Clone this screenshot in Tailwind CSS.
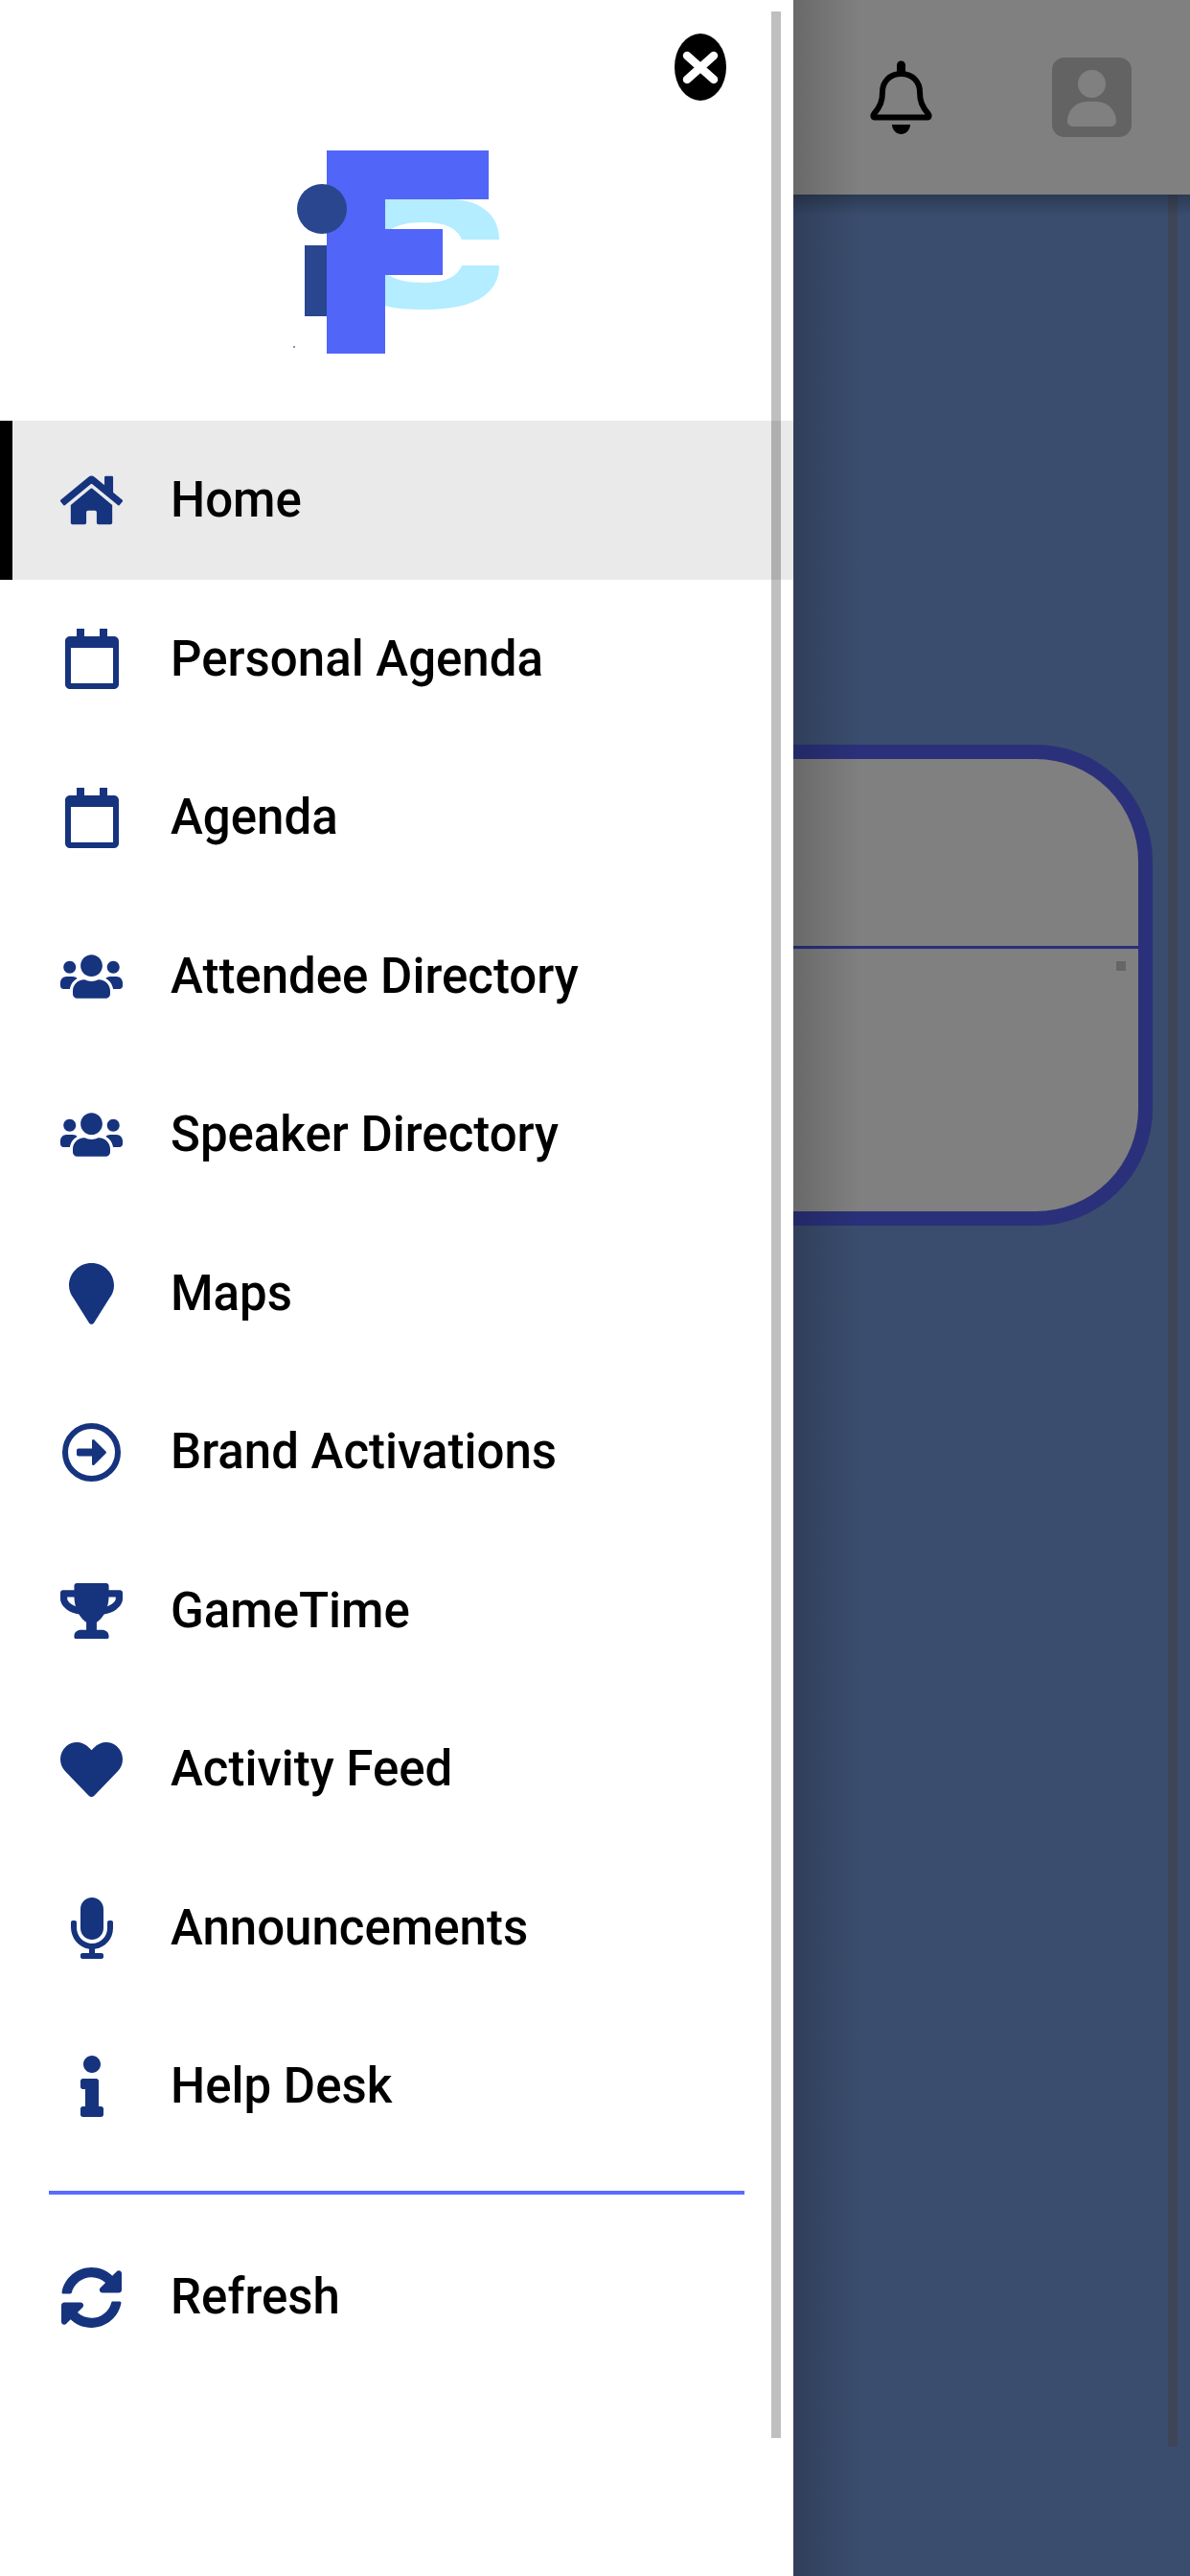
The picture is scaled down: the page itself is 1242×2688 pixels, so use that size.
<!DOCTYPE html>
<html lang="en">
  <head>
    <meta charset="UTF-8" />
    <meta name="viewport" content="width=device-width, initial-scale=1.0" />
    <title>Menu</title>
    <script src="https://cdn.jsdelivr.net/npm/@tailwindcss/browser@4"></script>
  </head>

  <body class="bg-[#3a4d6e]">
    <div class="flex w-[1242px] h-[2688px] overflow-hidden font-['Roboto',sans-serif]">
      <!-- drawer -->
      <aside class="relative w-[828px] shrink-0 bg-white text-black font-medium text-[51px]">
        <button class="absolute left-[704px] top-[35px] w-[54px] h-[70px]">
          <svg viewBox="0 0 54 70" class="block w-full h-full">
            <ellipse cx="27" cy="35" rx="27" ry="35" fill="#000" />
            <path d="M13 23L41 48M41 23L13 48" stroke="#fff" stroke-width="8.5" stroke-linecap="round" />
          </svg>
        </button>

        <div class="h-[439px] pt-[140px]">
          <svg viewBox="294 140 240 240" class="block w-[240px] h-[240px] mx-auto">
            <path fill="#b3edff" d="M402 208H470C503 208 521 226 521 250H482C477 238 465 232 442 232C425 232 412 235 402 243ZM402 285C412 292 425 295 442 295C465 295 477 289 482 277H521C521 304 500 323 442 323C425 323 412 322 402 319Z" />
            <rect x="318" y="256" width="24" height="74" fill="#29468f" />
            <path fill="#5165f8" d="M341 157H510V208H402V239H462V287H402V369H341Z" />
            <circle cx="336" cy="218" r="26" fill="#29468f" />
            <rect x="306" y="361" width="2" height="2" fill="#8090d0" />
          </svg>
        </div>

        <nav class="flex flex-col">
          <a class="flex items-center h-[166px] pl-[50px] border-l-[13px] border-black bg-[#eaeaea]">
            <span class="flex justify-center w-[65px] mr-[50px] text-[#16337e]">
              <svg viewBox="0 0 576 512" class="w-[65px] h-[58px] fill-current"><path d="M280.37 148.26L96 300.11V464a16 16 0 0 0 16 16l112.06-.29a16 16 0 0 0 15.92-16V368a16 16 0 0 1 16-16h64a16 16 0 0 1 16 16v95.64a16 16 0 0 0 16 16.05L464 480a16 16 0 0 0 16-16V300L295.67 148.26a12.19 12.19 0 0 0-15.3 0zM571.6 251.47L488 182.56V44.05a12 12 0 0 0-12-12h-56a12 12 0 0 0-12 12v72.61L318.47 43a48 48 0 0 0-61 0L4.34 251.47a12 12 0 0 0-1.6 16.9l25.5 31A12 12 0 0 0 45.15 301l235.22-193.74a12.19 12.19 0 0 1 15.3 0L530.9 301a12 12 0 0 0 16.9-1.6l25.5-31a12 12 0 0 0-1.7-16.93z" /></svg>
            </span>
            Home
          </a>

          <a class="flex items-center h-[165.5px] pl-[63px]">
            <span class="flex justify-center w-[65px] mr-[50px] text-[#16337e]">
              <svg viewBox="0 0 56 63" class="w-[56px] h-[63px] fill-current"><path fill-rule="evenodd" d="M12 0H20V8H36V0H44V8H51C53.8 8 56 10.2 56 13V58C56 60.8 53.8 63 51 63H5C2.2 63 0 60.8 0 58V13C0 10.2 2.2 8 5 8H12ZM6 20V57H50V20Z" /></svg>
            </span>
            Personal Agenda
          </a>

          <a class="flex items-center h-[165.5px] pl-[63px]">
            <span class="flex justify-center w-[65px] mr-[50px] text-[#16337e]">
              <svg viewBox="0 0 56 63" class="w-[56px] h-[63px] fill-current"><path fill-rule="evenodd" d="M12 0H20V8H36V0H44V8H51C53.8 8 56 10.2 56 13V58C56 60.8 53.8 63 51 63H5C2.2 63 0 60.8 0 58V13C0 10.2 2.2 8 5 8H12ZM6 20V57H50V20Z" /></svg>
            </span>
            Agenda
          </a>

          <a class="flex items-center h-[165.5px] pl-[63px]">
            <span class="flex justify-center w-[65px] mr-[50px] text-[#16337e]">
              <svg viewBox="0 0 640 512" class="w-[65px] h-[52px] fill-current"><path d="M96 224c35.3 0 64-28.7 64-64s-28.7-64-64-64-64 28.7-64 64 28.7 64 64 64zm448 0c35.3 0 64-28.7 64-64s-28.7-64-64-64-64 28.7-64 64 28.7 64 64 64zm32 32h-64c-17.6 0-33.5 7.1-45.1 18.6 40.3 22.1 68.9 62 75.1 109.4h66c17.7 0 32-14.3 32-32v-32c0-35.3-28.7-64-64-64zm-256 0c61.9 0 112-50.1 112-112S381.9 32 320 32 208 82.1 208 144s50.1 112 112 112zm76.8 32h-8.3c-20.8 10-43.9 16-68.5 16s-47.6-6-68.5-16h-8.3C179.6 288 128 339.6 128 403.2V432c0 26.5 21.5 48 48 48h288c26.5 0 48-21.5 48-48v-28.8c0-63.6-51.6-115.2-115.2-115.2zm-223.7-13.4C161.5 263.1 145.6 256 128 256H64c-35.3 0-64 28.7-64 64v32c0 17.7 14.3 32 32 32h65.9c6.3-47.4 34.9-87.3 75.2-109.4z" /></svg>
            </span>
            Attendee Directory
          </a>

          <a class="flex items-center h-[165.5px] pl-[63px]">
            <span class="flex justify-center w-[65px] mr-[50px] text-[#16337e]">
              <svg viewBox="0 0 640 512" class="w-[65px] h-[52px] fill-current"><path d="M96 224c35.3 0 64-28.7 64-64s-28.7-64-64-64-64 28.7-64 64 28.7 64 64 64zm448 0c35.3 0 64-28.7 64-64s-28.7-64-64-64-64 28.7-64 64 28.7 64 64 64zm32 32h-64c-17.6 0-33.5 7.1-45.1 18.6 40.3 22.1 68.9 62 75.1 109.4h66c17.7 0 32-14.3 32-32v-32c0-35.3-28.7-64-64-64zm-256 0c61.9 0 112-50.1 112-112S381.9 32 320 32 208 82.1 208 144s50.1 112 112 112zm76.8 32h-8.3c-20.8 10-43.9 16-68.5 16s-47.6-6-68.5-16h-8.3C179.6 288 128 339.6 128 403.2V432c0 26.5 21.5 48 48 48h288c26.5 0 48-21.5 48-48v-28.8c0-63.6-51.6-115.2-115.2-115.2zm-223.7-13.4C161.5 263.1 145.6 256 128 256H64c-35.3 0-64 28.7-64 64v32c0 17.7 14.3 32 32 32h65.9c6.3-47.4 34.9-87.3 75.2-109.4z" /></svg>
            </span>
            Speaker Directory
          </a>

          <a class="flex items-center h-[165.5px] pl-[63px]">
            <span class="flex justify-center w-[65px] mr-[50px] text-[#16337e]">
              <svg viewBox="0 0 47 64" class="w-[47px] h-[64px] fill-current"><path d="M23.5 0C36.5 0 47 10.5 47 23.5C47 29 45 33 42 37L26 62.5C25 64.3 22 64.3 21 62.5L5 37C2 33 0 29 0 23.5C0 10.5 10.5 0 23.5 0Z" /></svg>
            </span>
            Maps
          </a>

          <a class="flex items-center h-[165.5px] pl-[63px]">
            <span class="flex justify-center w-[65px] mr-[50px] text-[#16337e]">
              <svg viewBox="0 0 61 61" class="w-[61px] h-[61px] fill-current"><circle cx="30.5" cy="30.5" r="27.5" fill="none" stroke="currentColor" stroke-width="6" /><path d="M17 26.5H31V18.5C31 17 32.5 16.5 33.5 17.5L45.5 29.5C46 30 46 31 45.5 31.5L33.5 43.5C32.5 44.5 31 44 31 42.5V34.5H17C15.9 34.5 15 33.6 15 32.5V28.5C15 27.4 15.9 26.5 17 26.5Z" /></svg>
            </span>
            Brand Activations
          </a>

          <a class="flex items-center h-[165.5px] pl-[63px]">
            <span class="flex justify-center w-[65px] mr-[50px] text-[#16337e]">
              <svg viewBox="0 0 576 512" class="w-[65px] h-[58px] fill-current"><path d="M552 64H448V24c0-13.3-10.7-24-24-24H152c-13.3 0-24 10.7-24 24v40H24C10.7 64 0 74.7 0 88v56c0 35.7 22.5 72.4 61.9 100.7 31.5 22.7 69.8 37.1 110 41.7C203.3 338.5 240 360 240 360v72h-48c-35.3 0-64 20.7-64 56v12c0 6.6 5.4 12 12 12h296c6.6 0 12-5.4 12-12v-12c0-35.3-28.7-56-64-56h-48v-72s36.7-21.5 68.1-73.6c40.3-4.6 78.6-19 110-41.7 39.3-28.3 61.9-65 61.9-100.7V88c0-13.3-10.7-24-24-24zM99.3 192.8C74.9 175.2 64 155.6 64 144v-16h64.2c1 32.6 5.8 61.2 12.8 86.2-15.1-5.2-29.2-12.4-41.7-21.4zM512 144c0 16.1-17.7 36.1-35.3 48.8-12.5 9-26.7 16.2-41.8 21.4 7-25 11.8-53.6 12.8-86.2H512v16z" /></svg>
            </span>
            GameTime
          </a>

          <a class="flex items-center h-[165.5px] pl-[63px]">
            <span class="flex justify-center w-[65px] mr-[50px] text-[#16337e]">
              <svg viewBox="0 0 512 512" class="w-[65px] h-[65px] fill-current"><path d="M462.3 62.6C407.5 15.9 326 24.3 275.7 76.2L256 96.5l-19.7-20.3C186.1 24.3 104.5 15.9 49.7 62.6c-62.8 53.6-66.1 149.8-9.9 207.9l193.5 199.8c12.5 12.9 32.8 12.9 45.3 0l193.5-199.8c56.3-58.1 53-154.3-9.8-207.9z" /></svg>
            </span>
            Activity Feed
          </a>

          <a class="flex items-center h-[165.5px] pl-[63px]">
            <span class="flex justify-center w-[65px] mr-[50px] text-[#16337e]">
              <svg viewBox="0 0 352 512" class="w-[44px] h-[64px] fill-current"><path d="M176 352c53.02 0 96-42.98 96-96V96c0-53.02-42.98-96-96-96S80 42.98 80 96v160c0 53.02 42.98 96 96 96zm160-160h-16c-8.84 0-16 7.16-16 16v48c0 74.8-64.49 134.82-140.79 127.38C96.71 376.89 48 317.11 48 250.3V208c0-8.84-7.16-16-16-16H16c-8.84 0-16 7.16-16 16v40.16c0 89.64 63.97 169.55 152 181.69V464H96c-8.84 0-16 7.16-16 16v16c0 8.84 7.16 16 16 16h160c8.84 0 16-7.16 16-16v-16c0-8.84-7.16-16-16-16h-56v-33.77C285.71 418.47 352 344.9 352 256v-48c0-8.84-7.16-16-16-16z" /></svg>
            </span>
            Announcements
          </a>

          <a class="flex items-center h-[165.5px] pl-[63px]">
            <span class="flex justify-center w-[65px] mr-[50px] text-[#16337e]">
              <svg viewBox="0 0 192 512" class="w-[24px] h-[64px] fill-current"><path d="M20 424.229h20V279.771H20c-11.046 0-20-8.954-20-20V212c0-11.046 8.954-20 20-20h112c11.046 0 20 8.954 20 20v212.229h20c11.046 0 20 8.954 20 20V492c0 11.046-8.954 20-20 20H20c-11.046 0-20-8.954-20-20v-47.771c0-11.046 8.954-20 20-20zM96 0C56.235 0 24 32.235 24 72s32.235 72 72 72 72-32.235 72-72S135.764 0 96 0z" /></svg>
            </span>
            Help Desk
          </a>

          <div class="h-[4px] mt-[26px] ml-[51px] mr-[51px] bg-[#5a6bff]"></div>

          <a class="flex items-center h-[166px] mt-[24px] pl-[63px]">
            <span class="flex justify-center w-[65px] mr-[50px] text-[#16337e]">
              <svg viewBox="0 0 512 512" class="w-[65px] h-[65px] fill-current"><path d="M370.72 133.28C339.458 104.008 298.888 87.962 255.848 88c-77.458.068-144.328 53.178-162.791 126.85-1.344 5.363-6.122 9.15-11.651 9.15H24.103c-7.498 0-13.194-6.807-11.807-14.176C33.933 94.924 134.813 8 256 8c66.448 0 126.791 26.136 171.315 68.685L463.03 40.97C478.149 25.851 504 36.559 504 57.941V192c0 13.255-10.745 24-24 24H345.941c-21.382 0-32.09-25.851-16.971-40.971l41.75-41.749zM32 296h134.059c21.382 0 32.09 25.851 16.971 40.971l-41.75 41.75c31.262 29.273 71.835 45.319 114.876 45.28 77.418-.07 144.315-53.144 162.787-126.849 1.344-5.363 6.122-9.15 11.651-9.15h57.304c7.498 0 13.194 6.807 11.807 14.176C478.067 417.076 377.187 504 256 504c-66.448 0-126.791-26.136-171.315-68.685L48.97 471.03C33.851 486.149 8 475.441 8 454.059V320c0-13.255 10.745-24 24-24z" /></svg>
            </span>
            Refresh
          </a>
        </nav>

        <!-- drawer scrollbar -->
        <div class="absolute left-[805px] top-[12px] w-[10px] h-[2532px] bg-black/25"></div>
      </aside>

      <!-- page behind the drawer -->
      <main class="relative flex-1 flex flex-col min-w-0 overflow-hidden">
        <header class="flex items-center justify-end gap-[124px] h-[203px] shrink-0 pr-[61px] bg-[#808080]">
          <svg viewBox="0 0 67 77" class="w-[67px] h-[77px]">
            <path d="M33.5 14C21 14 14 23 14 33C14 42 12 48 5 56C4 57 4 59.500 6 59.500H61C63 59.500 63 57 62 56C55 48 53 42 53 33C53 23 46 14 33.500 14Z" fill="none" stroke="#000" stroke-width="6" stroke-linejoin="round" />
            <path d="M29 13V5A4.500 4.500 0 0 1 38 5V13Z" fill="#000" />
            <path d="M24 67H43C43 73 38 77 33.500 77C29 77 24 73 24 67Z" fill="#000" />
          </svg>
          <div class="flex flex-col items-center w-[83px] h-[83px] pt-[13px] rounded-[13px] bg-[#636363]">
            <div class="w-[29px] h-[29px] rounded-full bg-[#808080]"></div>
            <div class="w-[51px] h-[26px] mt-[4px] rounded-t-[22px] rounded-b-[6px] bg-[#808080]"></div>
          </div>
        </header>

        <div class="flex-1 pt-[574px]">
          <section class="w-[575px] h-[502px] -ml-[200px] overflow-hidden rounded-[122px] border-[15px] border-[#2a317a] bg-[#808080]">
            <div class="h-[195px]"></div>
            <div class="h-[4px] bg-[#2a317a] border-b border-[#77778a]"></div>
            <div class="flex justify-end pt-[12px] pr-[13px]">
              <span class="w-[10px] h-[10px] bg-[#666]"></span>
            </div>
          </section>
        </div>

        <!-- page scrollbar, drawer and header shadows -->
        <div class="absolute left-[391px] top-[203px] w-[10px] h-[2350px] bg-[#3d4557]"></div>
        <div class="absolute left-0 right-0 top-[203px] h-[22px] bg-linear-to-b from-black/25 to-transparent"></div>
        <div class="absolute left-0 top-0 bottom-0 w-[70px] bg-linear-to-r from-black/18 to-transparent"></div>
      </main>
    </div>
  </body>
</html>
